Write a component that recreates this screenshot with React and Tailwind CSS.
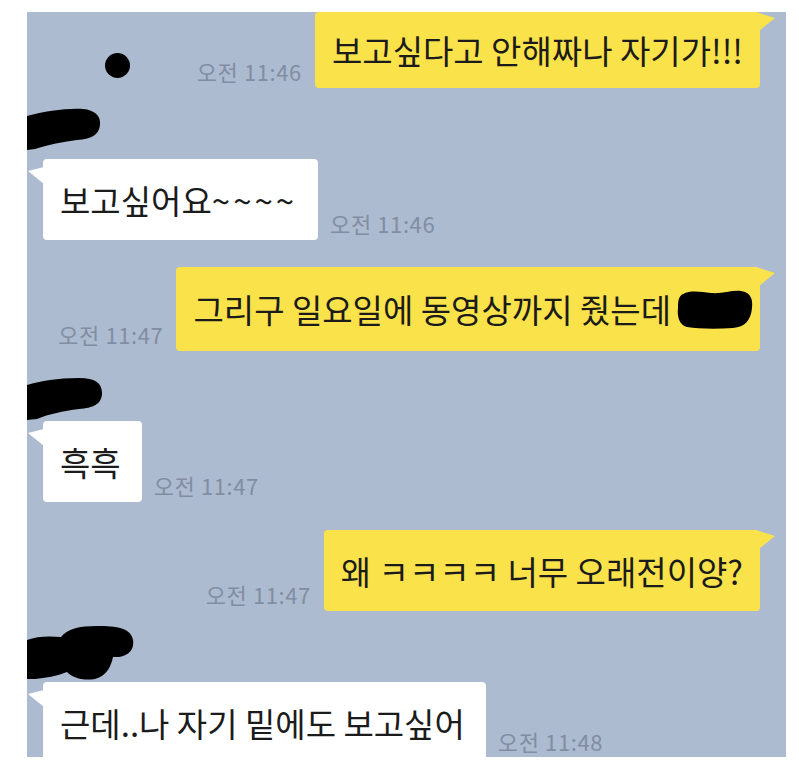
import React from 'react';

const font = { fontFamily: '"Noto Sans CJK KR", "Noto Sans", sans-serif' };

// sent (yellow) bubble tail sits on the top right
function RightTail() {
  return (
    <svg className="absolute -right-[16px] top-[1px]" width="17" height="18" viewBox="0 0 17 18">
      <path d="M0 0 L16 5 L0 18 Z" fill="#fae24a" />
    </svg>
  );
}

// received (white) bubble tail a little below the top left
function LeftTail() {
  return (
    <svg className="absolute -left-[15px] top-[8px]" width="16" height="18" viewBox="0 0 16 18">
      <path d="M16 0 L0 4 L16 17 Z" fill="#ffffff" />
    </svg>
  );
}

function Time({ children, last }) {
  return (
    <span className={`text-[22px] leading-[24px] tracking-[0.6px] text-[#818da3] whitespace-nowrap ${last ? 'mb-[11px]' : 'mb-[5px]'}`}>
      {children}
    </span>
  );
}

function Sent({ text, time, height, children }) {
  return (
    <div className="flex justify-end items-end gap-[13px] pr-[26px]">
      <Time>{time}</Time>
      <div className={`relative bg-[#fae24a] rounded-[4px] flex items-center pl-[17px] pr-[17px] ${height}`}>
        <span className="text-[33px] leading-[40px] text-[#1b1b1b] whitespace-nowrap">{text}</span>
        {children}
        <RightTail />
      </div>
    </div>
  );
}

function Received({ text, time, height, last }) {
  return (
    <div className="flex items-end gap-[12px] pl-[16px]">
      <div className={`relative bg-white rounded-[4px] flex items-center pl-[17px] pr-[21px] ${height}`}>
        <span className="text-[33px] leading-[40px] text-[#1b1b1b] whitespace-nowrap">{text}</span>
        <LeftTail />
      </div>
      <Time last={last}>{time}</Time>
    </div>
  );
}

function NameBlob1() {
  return (
    <svg width="74" height="42" viewBox="0 0 74 42" className="block">
      <path d="M0 8 C18 3 40 0 56 1 C68 2 74 8 73 17 C72 27 64 31 50 32 C34 34 20 37 8 41 L0 42 Z" fill="#000" />
    </svg>
  );
}

function NameBlob2() {
  return (
    <svg width="76" height="43" viewBox="0 0 76 43" className="block">
      <path d="M0 8 C14 4 30 1 52 1 C68 1 75 6 75 16 C75 27 66 31 52 32 C36 34 22 37 10 42 L0 43 Z" fill="#000" />
    </svg>
  );
}

function NameBlob3() {
  return (
    <svg width="108" height="54" viewBox="0 0 108 54" className="block">
      <path d="M0 14 C10 10 22 10 34 11 C40 3 52 0 70 0 C90 0 104 2 106 14 C108 26 98 32 86 31 C84 40 80 50 68 53 C56 55 46 52 40 46 C30 50 18 52 8 53 L0 53 Z" fill="#000" />
    </svg>
  );
}

function InlineBlob() {
  return (
    <svg width="76" height="39" viewBox="0 0 76 39" className="ml-[6px] -mr-[10px]">
      <path d="M6 4 C14 0 24 2 34 3 C46 4 54 0 64 1 C74 2 76 10 75 18 C74 30 68 37 56 38 C40 39 22 39 10 37 C2 35 0 26 1 18 C1 10 2 6 6 4 Z" fill="#000" />
    </svg>
  );
}

export default function App() {
  return (
    <div className="w-full h-[766px] bg-white pt-[12px] pl-[27px]" style={font}>
      <div className="relative w-[759px] h-[745px] bg-[#adbbd0] overflow-hidden flex flex-col">
        <span className="absolute left-[78px] top-[41px] w-[25px] h-[25px] rounded-full bg-black" />

        <Sent text="보고싶다고 안해짜나 자기가!!!" time="오전 11:46" height="h-[76px]" />

        <div className="mt-[20px]">
          <NameBlob1 />
          <div className="mt-[9px]">
            <Received
              text={<>보고싶어요<span className="tracking-[3px]">~~~~</span></>}
              time="오전 11:46"
              height="h-[81px]"
            />
          </div>
        </div>

        <div className="mt-[27px]">
          <Sent text="그리구 일요일에 동영상까지 줬는데" time="오전 11:47" height="h-[84px]">
            <InlineBlob />
          </Sent>
        </div>

        <div className="mt-[26px]">
          <NameBlob2 />
          <div className="mt-[1px]">
            <Received text="흑흑" time="오전 11:47" height="h-[81px]" />
          </div>
        </div>

        <div className="mt-[28px]">
          <Sent text="왜 ㅋㅋㅋㅋ 너무 오래전이양?" time="오전 11:47" height="h-[81px]" />
        </div>

        <div className="mt-[15px]">
          <NameBlob3 />
          <div className="mt-[2px]">
            <Received text="근데..나 자기 밑에도 보고싶어" time="오전 11:48" height="h-[82px]" last />
          </div>
        </div>
      </div>
    </div>
  );
}
